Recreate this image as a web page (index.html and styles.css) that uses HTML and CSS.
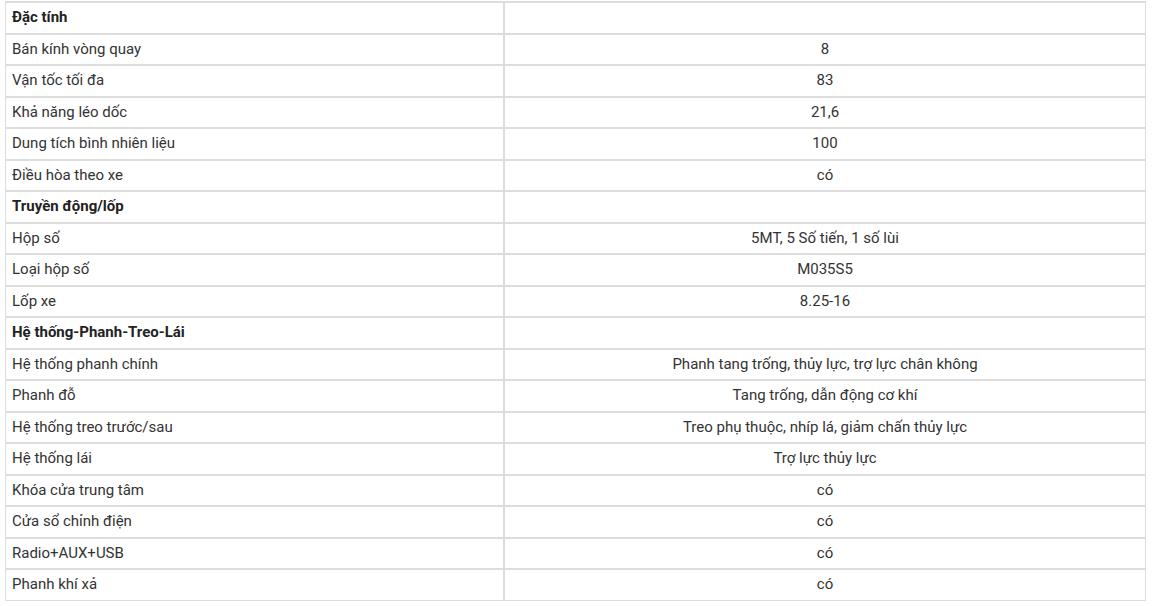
FILE: index.html
```html
<!DOCTYPE html>
<html lang="vi">
<head>
<meta charset="utf-8">
<title>Thông số</title>
<link rel="stylesheet" href="styles.css">
</head>
<body>
<table class="spec">
<colgroup><col class="c1"><col class="c2"></colgroup>
<tbody>
<tr class="first"><td class="h">Đặc tính</td><td></td></tr>
<tr><td>Bán kính vòng quay</td><td class="v">8</td></tr>
<tr><td>Vận tốc tối đa</td><td class="v">83</td></tr>
<tr><td>Khả năng léo dốc</td><td class="v">21,6</td></tr>
<tr><td>Dung tích bình nhiên liệu</td><td class="v">100</td></tr>
<tr><td>Điều hòa theo xe</td><td class="v">có</td></tr>
<tr><td class="h">Truyền động/lốp</td><td></td></tr>
<tr><td>Hộp số</td><td class="v">5MT, 5 Số tiến, 1 số lùi</td></tr>
<tr><td>Loại hộp số</td><td class="v">M035S5</td></tr>
<tr><td>Lốp xe</td><td class="v">8.25-16</td></tr>
<tr><td class="h">Hệ thống-Phanh-Treo-Lái</td><td></td></tr>
<tr><td>Hệ thống phanh chính</td><td class="v">Phanh tang trống, thủy lực, trợ lực chân không</td></tr>
<tr><td>Phanh đỗ</td><td class="v">Tang trống, dẫn động cơ khí</td></tr>
<tr><td>Hệ thống treo trước/sau</td><td class="v">Treo phụ thuộc, nhíp lá, giảm chấn thủy lực</td></tr>
<tr><td>Hệ thống lái</td><td class="v">Trợ lực thủy lực</td></tr>
<tr><td>Khóa cửa trung tâm</td><td class="v">có</td></tr>
<tr><td>Cửa sổ chỉnh điện</td><td class="v">có</td></tr>
<tr><td>Radio+AUX+USB</td><td class="v">có</td></tr>
<tr><td>Phanh khí xả</td><td class="v">có</td></tr>
</tbody>
</table>
</body>
</html>
```
FILE: styles.css
```css
html, body {
  margin: 0;
  padding: 0;
  background: #fff;
}
body {
  padding: 1px 0 0 5px;
  font-family: Roboto, "Liberation Sans", Arial, sans-serif;
  font-size: 15px;
  color: #333;
}
.spec {
  border-collapse: separate;
  border-spacing: 0;
  width: 1141px;
  table-layout: fixed;
}
.c1 { width: 499px; }
.spec td {
  border: 1px solid #ddd;
  padding: 4px 6px;
  line-height: 21.5px;
  vertical-align: middle;
}
.spec tr.first td {
  border-top-width: 2px;
}
.spec td.h {
  font-weight: bold;
  color: #222;
}
.spec td.v {
  text-align: center;
}
```
